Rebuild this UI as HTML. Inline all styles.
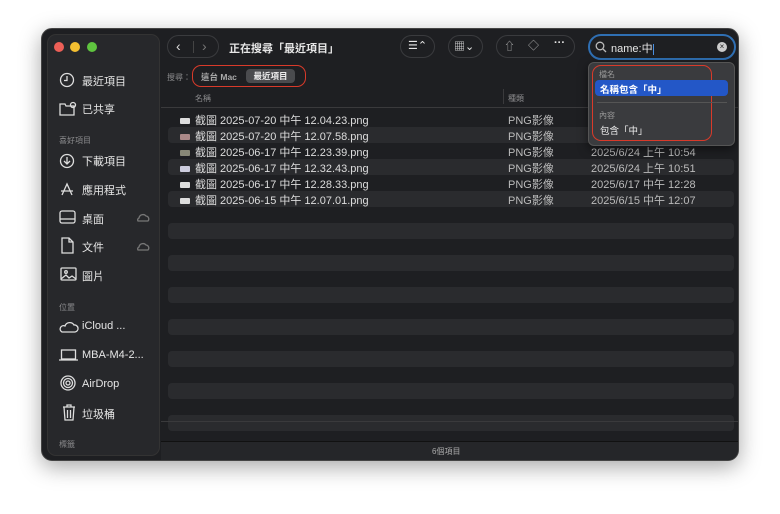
<!DOCTYPE html>
<html><head><meta charset="utf-8"><style>
*{margin:0;padding:0;box-sizing:border-box}
body{width:780px;height:514px;background:#fff;font-family:"Liberation Sans","Noto Sans CJK TC",sans-serif;position:relative;overflow:hidden}
.win{position:absolute;left:41px;top:28px;width:698px;height:433px;background:#1e1f22;border-radius:11px;box-shadow:0 6px 22px rgba(0,0,0,.35);border:1px solid #444;overflow:hidden}
.side{position:absolute;left:5px;top:5px;width:113px;height:422px;background:#27282b;border-radius:9px;border:1px solid #333}
.abs{position:absolute}
.t{color:#e6e6e6;font-size:11px;white-space:nowrap}
.g{color:#8a8a8c;font-size:8px}
.dot{position:absolute;top:13px;width:10px;height:10px;border-radius:50%}
.row{position:absolute;left:126px;width:566px;height:16px;border-radius:4px}
.pill{position:absolute;top:6px;height:23px;border:1px solid #3a3b3e;border-radius:12px}
.ico{position:absolute;stroke:#ddd;fill:none;stroke-width:1.3}
</style></head><body>
<div class="win">
 <div class="side"></div>
 <div class="dot" style="left:12px;background:#ed5f57"></div>
 <div class="dot" style="left:28px;background:#f4bf31"></div>
 <div class="dot" style="left:45px;background:#5fc43f"></div>
 <!-- sidebar items -->
 <svg class="ico" style="left:17px;top:43px" width="16" height="16"><circle cx="8" cy="8" r="6.5"/><path d="M8 4v4.5h-3"/></svg>
 <div class="abs t" style="left:40px;top:44px">最近項目</div>
 <svg class="ico" style="left:17px;top:72px" width="18" height="16"><path d="M1 3h5l1 2h8v9H1z"/><circle cx="14" cy="4" r="2.5"/></svg>
 <div class="abs t" style="left:40px;top:72px">已共享</div>
 <div class="abs g" style="left:17px;top:106px">喜好項目</div>
 <svg class="ico" style="left:17px;top:124px" width="16" height="16"><circle cx="8" cy="8" r="6.5"/><path d="M8 4v7M5 8l3 3 3-3"/></svg>
 <div class="abs t" style="left:40px;top:124px">下載項目</div>
 <svg class="ico" style="left:17px;top:152px" width="16" height="16"><path d="M3 14L8 3l5 11M2 10h12"/></svg>
 <div class="abs t" style="left:40px;top:153px">應用程式</div>
 <svg class="ico" style="left:17px;top:181px" width="17" height="15"><rect x="1" y="1" width="15" height="12" rx="2"/><path d="M1 9h15"/></svg>
 <div class="abs t" style="left:40px;top:182px">桌面</div>
 <svg class="ico" style="left:94px;top:183px;stroke:#777" width="14" height="10"><path d="M2 9h10a3 3 0 0 0-2-5 4 4 0 0 0-7 2 2 2 0 0 0-1 3z"/></svg>
 <svg class="ico" style="left:19px;top:208px" width="14" height="17"><path d="M1 1h7l4 4v11H1zM8 1v4h4"/></svg>
 <div class="abs t" style="left:40px;top:210px">文件</div>
 <svg class="ico" style="left:94px;top:212px;stroke:#777" width="14" height="10"><path d="M2 9h10a3 3 0 0 0-2-5 4 4 0 0 0-7 2 2 2 0 0 0-1 3z"/></svg>
 <svg class="ico" style="left:18px;top:238px" width="17" height="15"><rect x="1" y="1" width="15" height="12" rx="1"/><path d="M1 12l5-4 3 3 3-2 4 3" /><circle cx="6" cy="5" r="1.3"/></svg>
 <div class="abs t" style="left:40px;top:239px">圖片</div>
 <div class="abs g" style="left:17px;top:273px">位置</div>
 <svg class="ico" style="left:17px;top:290px" width="20" height="14"><path d="M3 13h13a3.5 3.5 0 0 0-1-7 5 5 0 0 0-9 1 3 3 0 0 0-3 6z"/></svg>
 <div class="abs t" style="left:40px;top:291px">iCloud ...</div>
 <svg class="ico" style="left:17px;top:320px" width="20" height="12"><rect x="2.5" y="1" width="14" height="9"/><path d="M0 11h19"/></svg>
 <div class="abs t" style="left:40px;top:320px">MBA-M4-2...</div>
 <svg class="ico" style="left:18px;top:346px" width="16" height="16"><circle cx="8" cy="8" r="7"/><circle cx="8" cy="8" r="4.5"/><circle cx="8" cy="8" r="2"/></svg>
 <div class="abs t" style="left:40px;top:349px">AirDrop</div>
 <svg class="ico" style="left:20px;top:375px" width="14" height="17"><path d="M1 3h12M5 3V1h4v2M2 3l1 13h8l1-13M5.5 6v8M8.5 6v8"/></svg>
 <div class="abs t" style="left:40px;top:377px">垃圾桶</div>
 <div class="abs g" style="left:17px;top:410px">標籤</div>
 <!-- toolbar -->
 <div class="pill" style="left:125px;width:52px"></div>
 <div class="abs t" style="left:134px;top:9px;font-size:14px;color:#ddd">‹</div>
 <div class="abs" style="left:151px;top:12px;width:1px;height:12px;background:#444"></div>
 <div class="abs t" style="left:160px;top:9px;font-size:14px;color:#777">›</div>
 <div class="abs t" style="left:187px;top:11px;font-weight:bold;font-size:11px">正在搜尋「最近項目」</div>
 <div class="pill" style="left:358px;width:35px"></div>
 <div class="abs t" style="left:366px;top:10px;font-size:11px">☰⌃</div>
 <div class="pill" style="left:406px;width:35px"></div>
 <div class="abs t" style="left:412px;top:9px;font-size:11px">▦⌄</div>
 <div class="pill" style="left:454px;width:79px"></div>
 <div class="abs t" style="left:462px;top:9px;color:#aaa">⇧</div>
 <div class="abs t" style="left:486px;top:8px;color:#aaa">◇</div>
 <div class="abs t" style="left:512px;top:8px;font-weight:bold">···</div>
 <div class="abs" style="left:546px;top:5px;width:148px;height:26px;border:2px solid #2f6fb3;border-radius:13px;background:#1e1f22"></div>
 <svg class="ico" style="left:553px;top:12px;stroke:#bbb" width="12" height="12"><circle cx="5" cy="5" r="3.8"/><path d="M8 8l3 3"/></svg>
 <div class="abs t" style="left:569px;top:11px">name:中<span style="display:inline-block;width:1px;height:11px;background:#4a90e2;vertical-align:middle"></span></div>
 <div class="abs" style="left:675px;top:13px;width:10px;height:10px;border-radius:50%;background:#ccc;color:#222;font-size:8px;text-align:center;line-height:10px">×</div>
 <!-- scope bar -->
 <div class="abs g" style="left:125px;top:43px">搜尋：</div>
 <div class="abs" style="left:150px;top:36px;width:114px;height:22px;border:1.5px solid #d93a2a;border-radius:9px"></div>
 <div class="abs" style="left:159px;top:42px;font-size:8.5px;color:#aaa;font-weight:bold">這台 Mac</div>
 <div class="abs" style="left:204px;top:40px;width:49px;height:14px;background:#4a4b4e;border-radius:4px;font-size:8.5px;color:#eee;font-weight:bold;text-align:center;line-height:14px">最近項目</div>
 <!-- header -->
 <div class="abs g" style="left:153px;top:64px">名稱</div>
 <div class="abs" style="left:461px;top:60px;width:1px;height:15px;background:#3a3a3c"></div>
 <div class="abs g" style="left:466px;top:64px">種類</div>
 <div class="abs" style="left:119px;top:78px;width:579px;height:1px;background:#3a3a3c"></div>
 <!-- rows -->
 <div class="row" style="top:98px;background:#2a2b2e"></div>
 <div class="row" style="top:130px;background:#2a2b2e"></div>
 <div class="row" style="top:162px;background:#2a2b2e"></div>
 <div class="row" style="top:194px;background:#2a2b2e"></div>
 <div class="row" style="top:226px;background:#2a2b2e"></div>
 <div class="row" style="top:258px;background:#2a2b2e"></div>
 <div class="row" style="top:290px;background:#2a2b2e"></div>
 <div class="row" style="top:322px;background:#2a2b2e"></div>
 <div class="row" style="top:354px;background:#2a2b2e"></div>
 <div class="row" style="top:386px;background:#2a2b2e"></div>
 <div class="abs" style="left:119px;top:392px;width:579px;height:1px;background:#3a3a3c"></div>
 <div class="abs" style="left:119px;top:412px;width:579px;height:1px;background:#111"></div>
 <div class="abs" style="left:119px;top:413px;width:579px;height:20px;background:#252629"></div>
 <div class="abs" style="left:390px;top:417px;font-size:8px;color:#aaa">6個項目</div>
 <div style="position:absolute;left:138px;top:84px;line-height:16px;font-size:11px;color:#ddd">
  <div><span style="display:inline-block;width:10px;height:6px;background:#ddd;border-radius:1px;margin-right:5px"></span>截圖 2025-07-20 中午 12.04.23.png</div>
  <div><span style="display:inline-block;width:10px;height:6px;background:#a88;border-radius:1px;margin-right:5px"></span>截圖 2025-07-20 中午 12.07.58.png</div>
  <div><span style="display:inline-block;width:10px;height:6px;background:#887;border-radius:1px;margin-right:5px"></span>截圖 2025-06-17 中午 12.23.39.png</div>
  <div><span style="display:inline-block;width:10px;height:6px;background:#ccd;border-radius:1px;margin-right:5px"></span>截圖 2025-06-17 中午 12.32.43.png</div>
  <div><span style="display:inline-block;width:10px;height:6px;background:#ddd;border-radius:1px;margin-right:5px"></span>截圖 2025-06-17 中午 12.28.33.png</div>
  <div><span style="display:inline-block;width:10px;height:6px;background:#ddd;border-radius:1px;margin-right:5px"></span>截圖 2025-06-15 中午 12.07.01.png</div>
 </div>
 <div style="position:absolute;left:466px;top:84px;line-height:16px;font-size:11px;color:#bbb">
  <div>PNG影像</div><div>PNG影像</div><div>PNG影像</div><div>PNG影像</div><div>PNG影像</div><div>PNG影像</div>
 </div>
 <div style="position:absolute;left:549px;top:84px;line-height:16px;font-size:11px;color:#bbb">
  <div>&nbsp;</div><div>&nbsp;</div><div>2025/6/24 上午 10:54</div><div>2025/6/24 上午 10:51</div><div>2025/6/17 中午 12:28</div><div>2025/6/15 中午 12:07</div>
 </div>
 <!-- dropdown -->
 <div class="abs" style="left:546px;top:33px;width:147px;height:84px;background:#3a3b3e;border:1px solid #555;border-radius:6px;box-shadow:0 3px 10px rgba(0,0,0,.5)"></div>
 <div class="abs" style="left:550px;top:36px;width:120px;height:76px;border:1.5px solid #d93a2a;border-radius:9px"></div>
 <div class="abs" style="left:557px;top:40px;font-size:8px;color:#999">檔名</div>
 <div class="abs" style="left:553px;top:51px;width:133px;height:16px;background:#2357c7;border-radius:4px"></div>
 <div class="abs" style="left:558px;top:53px;font-size:9.5px;color:#fff;font-weight:bold">名稱包含「中」</div>
 <div class="abs" style="left:555px;top:73px;width:130px;height:1px;background:#555"></div>
 <div class="abs" style="left:557px;top:81px;font-size:8px;color:#999">內容</div>
 <div class="abs" style="left:558px;top:94px;font-size:9.5px;color:#eee">包含「中」</div>
</div>
</body></html>
